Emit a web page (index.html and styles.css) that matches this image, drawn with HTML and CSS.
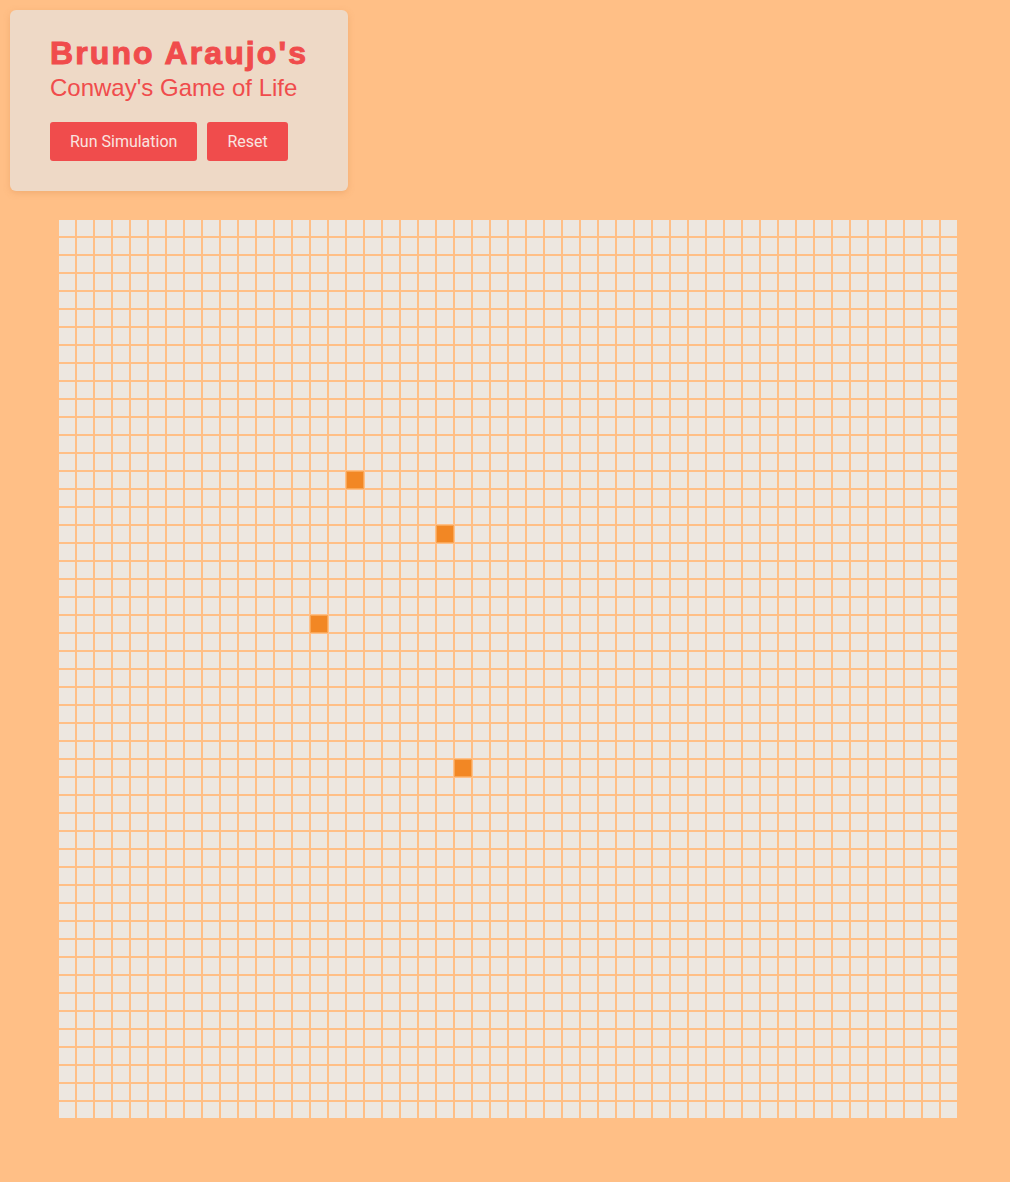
FILE: index.html
```html
<!DOCTYPE html>
<html lang="en">
<head>
<meta charset="utf-8">
<title>Conway's Game of Life</title>
<link rel="stylesheet" href="styles.css">
</head>
<body>
  <header class="panel">
    <h1 class="title">Bruno Araujo's</h1>
    <h2 class="subtitle">Conway's Game of Life</h2>
    <div class="actions">
      <button class="btn" type="button">Run Simulation</button>
      <button class="btn" type="button">Reset</button>
    </div>
  </header>
  <main class="board" id="board"></main>
  <script src="script.js"></script>
</body>
</html>
```
FILE: styles.css
```css
html, body {
  margin: 0;
  padding: 0;
  background: #ffbf86;
}
body {
  min-height: 1182px;
  font-family: "Liberation Sans", Arial, sans-serif;
}
.panel {
  display: inline-block;
  margin: 10px 0 0 10px;
  padding: 25px 40px 30px 40px;
  background: #eed9c6;
  border-radius: 6px;
  box-shadow: 0 2px 6px rgba(214, 140, 80, 0.35);
}
.title {
  margin: 0;
  font-size: 32px;
  line-height: 37px;
  font-weight: 700;
  letter-spacing: 2.1px;
  color: #f04c4c;
  -webkit-text-stroke: 1px #f04c4c;
}
.subtitle {
  margin: 0;
  padding-top: 1px;
  font-size: 24px;
  line-height: 29px;
  font-weight: 400;
  color: #f04c4c;
}
.actions {
  display: flex;
  gap: 10px;
  margin-top: 20px;
}
.btn {
  height: 39px;
  padding: 0 20px;
  border: none;
  border-radius: 3px;
  background: #f04c4c;
  color: #f9e4e0;
  font-family: Roboto, "Liberation Sans", sans-serif;
  font-size: 16px;
  cursor: pointer;
}
.board {
  display: grid;
  grid-template-columns: repeat(50, 18px);
  grid-auto-rows: 18px;
  width: 900px;
  margin: 28px 0 0 58px;
}
.cell {
  box-sizing: border-box;
  border: 1px solid #ffbf86;
  background: #ede7e0;
}
.cell.alive {
  background: #f28724;
  border-color: #f9a654;
}
```
FILE: script.js
```js
(function () {
  var board = document.getElementById('board');
  var alive = { '14-16': 1, '17-21': 1, '22-14': 1, '30-22': 1 };
  var frag = document.createDocumentFragment();
  for (var r = 0; r < 50; r++) {
    for (var c = 0; c < 50; c++) {
      var d = document.createElement('div');
      d.className = alive[r + '-' + c] ? 'cell alive' : 'cell';
      frag.appendChild(d);
    }
  }
  board.appendChild(frag);
})();
```
